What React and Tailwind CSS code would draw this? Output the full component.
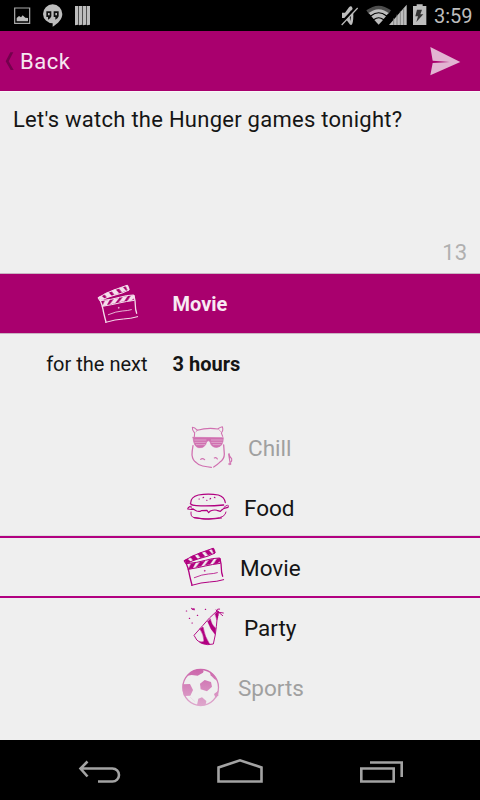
import React from "react";

const MAGENTA = "#b10080";

function Clapper({ color, className }) {
  return (
    <svg viewBox="24 24 180 180" className={className} fill="none" stroke={color} strokeLinecap="round" strokeLinejoin="round">
      <path d="M40 92Q62 78 84 70T126 55Q132 60 132 69Q111 80 91 84T46 101Z" strokeWidth="3" />
      <path d="M40 91l9-5 10 9-13 5zM58 81l12-6 10 12-13 5zM80 72l11-5 11 12-13 5zM102 64l11-4 10 11-12 5zM122 56l6-2 5 14-4 3z" fill={color} strokeWidth="1" />
      <path d="M47 101Q80 98 103 91T146 84L148 100Q124 103 103 108T52 118" strokeWidth="3" />
      <path d="M60 101l14-3-9 17-13 3zM87 96l15-3-12 16-15 3zM114 90l14-3-11 16-15 3zM138 86l9-2 1 8-10 9-10 1z" fill={color} strokeWidth="1" />
      <path d="M45 98Q52 115 54 127T63 165" strokeWidth="4" />
      <path d="M62 166Q92 157 115 156T158 149" strokeWidth="3" />
      <path d="M147 86Q151 102 151 115T155 139" strokeWidth="3.8" />
      <path d="M70 143Q94 133 112 132T139 128" strokeWidth="2.4" />
      <circle cx="101" cy="122.500" r="1.600" fill={color} strokeWidth="1" />
    </svg>
  );
}

function Cow() {
  return (
    <svg viewBox="24 9 180 180" className="size-[60px] shrink-0" fill="none" stroke="#d070b0" strokeWidth="3.200" strokeLinecap="round" strokeLinejoin="round">
      <path d="M73 65L74 54Q66 46 67 37Q74 37 82 46Q112 37 143 42Q149 37 157 35Q161 46 154 54L158 64" />
      <path d="M83 44l-5 7M146 43l6 7" strokeWidth="1.8" />
      <path d="M69 67L160 68Q160 94 142 97Q124 99 120 80Q116 75 110 80Q106 100 86 98Q71 96 69 67Z" fill="#d070b0" strokeWidth="2" />
      <path d="M74 75h34M75 82h31M79 89h25M124 75h33M125 82h31M129 89h22" stroke="#eddde8" strokeWidth="1.500" />
      <path d="M69 92Q66 109 66 120Q68 136 78 142Q86 151 98 153Q112 156 124 157M131 156Q141 150 149 142Q163 133 163 117L161 90" strokeWidth="3.800" />
      <path d="M92 133q5-5 12 1M133 129q6-3 9 3" strokeWidth="3.400" />
      <path d="M177 116Q178 126 185 131Q186 137 183 141M176 118L181 147" strokeWidth="3.400" />
      <ellipse cx="179" cy="147" rx="4" ry="2.500" fill="#d070b0" strokeWidth="1" />
    </svg>
  );
}

function Burger() {
  return (
    <svg viewBox="24 189 180 180" className="size-[60px] shrink-0" fill="none" stroke={MAGENTA} strokeWidth="3.400" strokeLinecap="round" strokeLinejoin="round">
      <path d="M62 264Q62 246 85 240Q115 235 145 240Q164 246 166 263" />
      <path d="M61 266Q66 272 79 272Q119 274 161 270" strokeWidth="3.800" />
      <path d="M87 252h1M99 248l2-1M110 256h1M120 252l2-2M133 247l2 1" strokeWidth="3.200" />
      <path d="M61 274Q53 278 53 282Q62 284 70 283L80 288Q88 291 94 287Q103 286 111 286L116 293L121 288Q133 283 141 286L151 289Q159 279 174 277" />
      <path d="M64 274Q57 278 72 283M171 271q-6 3-9 6M174 271l1 4" strokeWidth="2.800" />
      <path d="M63 291Q61 306 73 308Q104 316 135 310Q166 308 168 291" strokeWidth="2.800" />
      <path d="M73 308Q114 316 154 309" strokeWidth="3.800" />
    </svg>
  );
}

function PartyHat() {
  return (
    <svg viewBox="24 9 180 180" className="size-[60px] shrink-0" fill="none" stroke={MAGENTA} strokeWidth="2.800" strokeLinecap="round" strokeLinejoin="round">
      <path d="M142 47Q116 69 98 92L72 121Q78 137 94 145Q114 152 130 147Q137 119 139 95T144 50" />
      <path d="M90 102L99 96Q104 125 119 148Q100 149 88 140Q99 142 102 138Q101 118 90 102Z" fill={MAGENTA} strokeWidth="1.500" />
      <path d="M113 80L121 71Q124 88 137 100L135 118Q121 103 113 80Z" fill={MAGENTA} strokeWidth="1" />
      <path d="M135 57L142 51L144 66L141 74Z" fill={MAGENTA} strokeWidth="1" />
      <path d="M138 45L158 62M140 51L160 54M139 46Q143 40 149 42M145 49L144 62" />
      <path d="M49 48h1M65 40l3 3M72 44h1M58 70h1M66 84h1M82 61h1M106 43h1M70 42l2-1" strokeWidth="3.600" />
    </svg>
  );
}

function Ball() {
  return (
    <svg viewBox="24 189 180 180" className="size-[60px] shrink-0">
      <defs>
        <linearGradient id="ball" x1="0" y1="222" x2="0" y2="333" gradientUnits="userSpaceOnUse">
          <stop offset="0" stopColor="#cc66ab" />
          <stop offset="1" stopColor="#dea8cd" />
        </linearGradient>
      </defs>
      <ellipse cx="92" cy="277.500" rx="53.500" ry="54" fill="none" stroke="url(#ball)" strokeWidth="3.800" />
      <g fill="url(#ball)">
        <path d="M52 242Q65 224 91 223Q105 225 99 233L83 242L65 240Z" />
        <path d="M38 268L60 267L69 285L61 302L42 303Q36 284 38 268Z" />
        <path d="M104 255L123 261L126 275L111 289L92 283L90 266Z" />
        <path d="M119 230Q136 240 142 257L133 252L122 241Z" />
        <path d="M145 287V301L137 310L132 297Z" />
        <path d="M85 311L96 307L109 318L107 330Q94 334 81 330Z" />
      </g>
      <path d="M60 306L75 320" stroke="#e3b5d4" strokeWidth="1" />
    </svg>
  );
}

function StatusBar() {
  return (
    <div className="flex h-[31px] shrink-0 bg-black">
      <svg viewBox="0 0 300 93" className="h-[31px] w-[100px]" fill="#bdbdbd">
        <path d="M44 24h45v46H44z" fill="none" stroke="#aaa" strokeWidth="3.600" />
        <path d="M50 64V54l7-6 6 4 5-6 8 7 8 1v10z" />
        <path d="M158 13a29 29 0 0 1 29 29c0 15-13 29-29 38V70a29 29 0 0 1-29-28a29 29 0 0 1 29-29z" />
        <path d="M139 34h15v15q-2 7-10 10v-8h-5zM161 34h15v15q-2 7-10 10v-8h-5z" fill="#111" />
        <path d="M144 39h5v7h-5zM166 39h5v7h-5z" />
        <path d="M225 18h9v56l-9 2zM237 18h9v56l-9 2zM249 18h9v56l-9 2zM261 18h9v56l-9 2z" />
        <path d="M234 18h2v57h-2zM246 18h2v57h-2zM258 18h2v57h-2z" fill="#777" />
      </svg>
      <svg viewBox="54 0 276 93" className="ml-auto h-[31px] w-[92px]" fill="#bdbdbd">
        <path d="M66 38h9l12-16q4-5 7-3q6 5 6 28t-6 28q-4 1-7-5L75 54h-9z" />
        <path d="M91 30q-5 17 0 34q4-17 0-34z" fill="#111" />
        <path d="M110 20L60 74" stroke="#000" strokeWidth="8" />
        <path d="M113 24L65 75" stroke="#bdbdbd" strokeWidth="3.500" />
        <path d="M139 31Q176 3 213 31L206 41Q176 18 146 41Z" fill="#4d4d4d" />
        <path d="M146 39Q176 16 206 39L200 46Q176 28 152 46Z" />
        <path d="M154 49Q176 31 198 49L191 57Q176 46 161 57Z" />
        <path d="M163 60Q176 49 189 60L176 74Z" />
        <path d="M260 14V75H207Z" />
        <path d="M221 55v20M231 44v31M241 34v41M251 24v51" stroke="#777" strokeWidth="2.500" />
        <path d="M279 18h11v-5h18v5h11v57h-40z" />
        <path d="M291 29h15l-5 14h9l-21 23 5-17h-8z" fill="#333" />
      </svg>
      <span className="ml-[4px] w-[46px] whitespace-nowrap pt-[1px] text-[20px] leading-[31px] text-[#bdbdbd]">3:59</span>
    </div>
  );
}

function Row({ icon, label, className }) {
  return (
    <div className="flex h-[60px] items-center pl-[178px]">
      {icon}
      <span className={"whitespace-nowrap text-[22.500px] leading-[30px] " + className}>{label}</span>
    </div>
  );
}

export default function App() {
  return (
    <div className="flex h-[800px] w-[480px] flex-col overflow-hidden bg-[#efefef] font-['Roboto',sans-serif] text-[#151515]">
      <StatusBar />
      <header className="flex h-[60px] shrink-0 items-center bg-[#a9006e]">
        <svg viewBox="0 93 48 180" className="h-[60px] w-[16px]">
          <path d="M31 157h9L26 184l15 26h-9L17 184Z" fill="#74004d" />
        </svg>
        <span className="ml-[4px] mt-[2px] text-[22px] leading-[30px] tracking-[0.500px] text-[#f6e6f1]">Back</span>
        <svg viewBox="320 93 160 180" className="ml-auto h-[60px] w-[53.300px]">
          <path d="M330 141L420 186L330 226L337 189L388 186L337 182Z" fill="#e2b4d2" />
        </svg>
      </header>
      <main className="flex h-[182px] shrink-0 flex-col justify-between border-t border-[#f8f8f8] px-[13px] pb-[5px] pt-[13px] text-[22px] leading-[30px]">
        <p className="whitespace-nowrap tracking-[0.260px]">Let's watch the Hunger games tonight?</p>
        <p className="text-right text-[#b0b0b0]">13</p>
      </main>
      <section className="flex h-[61px] shrink-0 items-center border-y border-[#c9b4c2] bg-[#a9006e] pl-[92.500px]">
        <Clapper color="#f5dfec" className="mt-[2px] size-[60px] shrink-0" />
        <span className="ml-[20px] mt-[1px] text-[20px] font-bold text-[#f8eaf3]">Movie</span>
      </section>
      <section className="flex h-[60px] shrink-0 items-center text-[20px]">
        <span className="w-[147.500px] text-right">for the next</span>
        <span className="ml-[25px] font-bold">3 hours</span>
      </section>
      <section className="mt-[24px] flex h-[322px] shrink-0 flex-col">
        <Row icon={<Cow />} label="Chill" className="ml-[10px] text-[#a0a0a0]" />
        <Row icon={<Burger />} label="Food" className="ml-[6px]" />
        <div className="-mt-[2px] h-[62px] shrink-0 border-y-2 border-[#b10080] shadow-[0_-1px_0_#ddd]">
          <Row icon={<Clapper color={MAGENTA} className="ml-[0.500px] size-[60px] shrink-0" />} label="Movie" className="ml-[1.500px]" />
        </div>
        <Row icon={<PartyHat />} label="Party" className="ml-[6px]" />
        <Row icon={<Ball />} label="Sports" className="text-[#a0a0a0]" />
      </section>
      <nav className="h-[60px] shrink-0 bg-black">
        <svg viewBox="0 0 480 60" className="h-[60px] w-[480px]" fill="none" stroke="#a3a3a3" strokeWidth="2.600">
          <path d="M87.500 21.500L80.500 28.500L87.500 36.500M81 28.500H112.500A6.400 6.400 0 0 1 112.500 41.500H98" />
          <path d="M218.500 41.500V27.500L240 20.300L261.500 27.500V41.500Z" />
          <path d="M361.300 28.500H393.700V41.500H361.300ZM370 22.500H401.700V37" />
        </svg>
      </nav>
    </div>
  );
}
